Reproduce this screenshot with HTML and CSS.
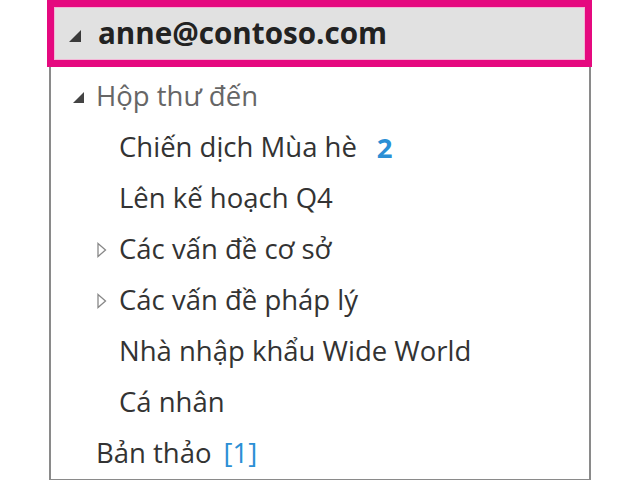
FILE: index.html
```html
<!DOCTYPE html>
<html lang="vi">
<head>
  <meta charset="UTF-8">
  <title>Thư mục</title>
  <link rel="stylesheet" href="styles.css">
</head>
<body>
  <div class="pane">
    <div class="account">
      <svg class="tri-open big" width="12" height="12" viewBox="0 0 10 10"><polygon points="10,0 10,10 0,10" fill="#3a3a3a"/></svg>
      <span class="account-name">anne@contoso.com</span>
    </div>
    <ul class="tree">
      <li class="row top">
        <svg class="tri-open" width="11" height="11" viewBox="0 0 10 10"><polygon points="10,0 10,10 0,10" fill="#444"/></svg>
        <span class="label muted">Hộp thư đến</span>
      </li>
      <li class="row sub"><span class="label">Chiến dịch Mùa hè</span><span class="count">2</span></li>
      <li class="row sub"><span class="label">Lên kế hoạch Q4</span></li>
      <li class="row sub">
        <svg class="tri-closed" width="10" height="16" viewBox="0 0 10 16"><polygon points="1,1.5 8.5,8 1,14.5" fill="none" stroke="#888" stroke-width="1.3"/></svg>
        <span class="label">Các vấn đề cơ sở</span>
      </li>
      <li class="row sub">
        <svg class="tri-closed" width="10" height="16" viewBox="0 0 10 16"><polygon points="1,1.5 8.5,8 1,14.5" fill="none" stroke="#888" stroke-width="1.3"/></svg>
        <span class="label">Các vấn đề pháp lý</span>
      </li>
      <li class="row sub"><span class="label">Nhà nhập khẩu Wide World</span></li>
      <li class="row sub"><span class="label">Cá nhân</span></li>
      <li class="row top"><span class="label">Bản thảo</span><span class="draft">[1]</span></li>
    </ul>
  </div>
</body>
</html>
```

FILE: styles.css
```css
body {
  margin: 0;
  padding: 0;
  background-color: #fff;
  font-family: "Open Sans", "Noto Sans", sans-serif;
  color: #333;
}
.pane {
  width: 545px;
  margin-left: 47px;
  display: flex;
  flex-direction: column;
}
.account {
  height: 53px;
  border: 7px solid #e5097f;
  background-color: #e1e1e1;
  display: flex;
  align-items: center;
  padding-left: 15px;
  box-shadow: inset 0 0 0 1px #f3b6d6;
}
.account-name {
  font-weight: bold;
  font-size: 29.6px;
  color: #222;
  margin-left: 5px;
  margin-top: -2px;
}
.tree {
  list-style: none;
  margin: 0 1px 0 2px;
  padding: 4px 0 0 0;
  border: 2px solid #8a8a8a;
  border-top: none;
  height: 408px;
}
.row {
  height: 51px;
  display: flex;
  align-items: center;
  font-size: 27.5px;
}
.row.top {
  padding-left: 45px;
}
.row.sub {
  padding-left: 68px;
}
.label {
  margin-top: -2px;
}
.tri-open {
  margin-left: -23px;
  margin-right: 12px;
  margin-top: 2px;
}
.tri-open.big {
  margin-left: 0;
  margin-top: 4px;
}
.tri-closed {
  margin-left: -22px;
  margin-right: 12px;
}
.muted {
  color: #666;
}
.count {
  color: #2b8fd5;
  font-weight: bold;
  margin-left: 20px;
}
.draft {
  color: #2b8fd5;
  margin-left: 12px;
  margin-top: -2px;
}
```
